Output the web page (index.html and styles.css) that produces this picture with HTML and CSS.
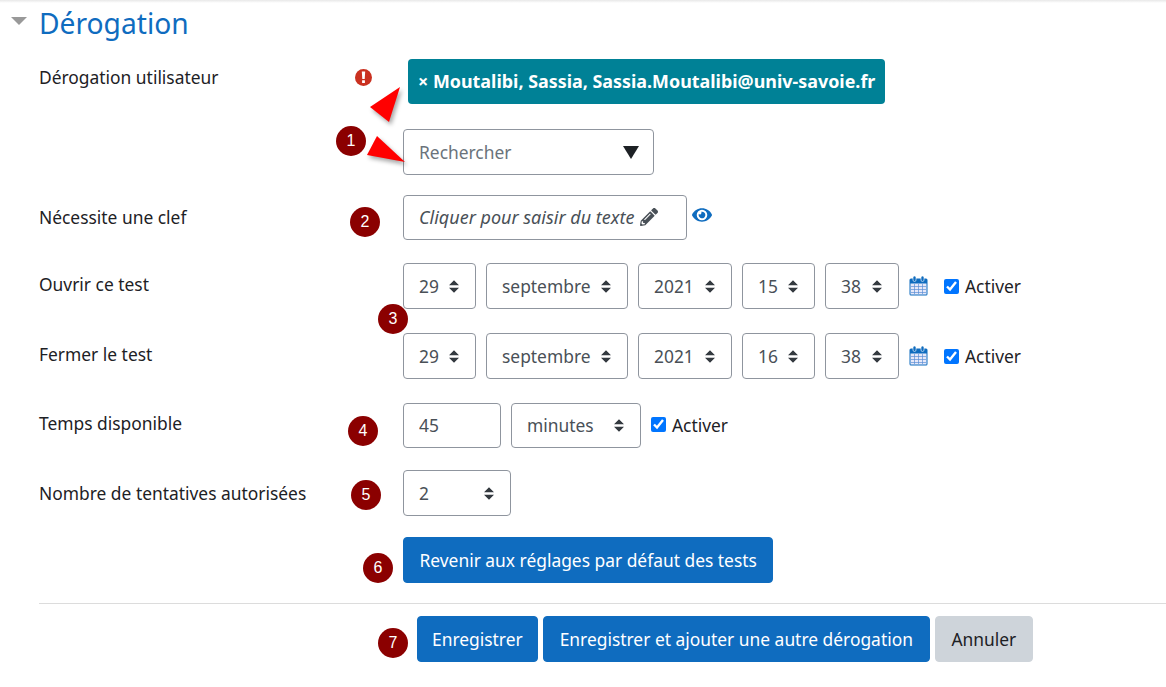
FILE: index.html
```html
<!DOCTYPE html>
<html lang="fr">
<head>
  <meta charset="UTF-8">
  <title>Dérogation</title>
  <link rel="stylesheet" href="styles.css">
</head>
<body>
  <div class="topshade"></div>
  <form class="page">
    <!-- Section heading -->
    <div class="heading">
      <svg class="collapse" width="16" height="8" viewBox="0 0 16 8"><path d="M0 0h16L8 8z" fill="#999"/></svg>
      <h2>Dérogation</h2>
    </div>

    <div class="row row-user">
      <div class="label label-top">
        <span>Dérogation utilisateur</span>
        <svg class="error" width="17" height="17" viewBox="0 0 17 17"><circle cx="8.5" cy="8.5" r="8.5" fill="#ca3120"/><path d="M6.800 2.500h3.400l-.5 7.500H7.300zM7.100 11.200h2.800V14H7.100z" fill="#fff"/></svg>
      </div>
      <span class="chip">× Moutalibi, Sassia, Sassia.Moutalibi@univ-savoie.fr</span>
    </div>

    <div class="row row-search">
      <div class="label"></div>
      <div class="search">
        <span>Rechercher</span>
        <svg width="16" height="13" viewBox="0 0 16 13"><path d="M0 0h16L8 13z" fill="#1d2125"/></svg>
      </div>
    </div>

    <div class="row row-key">
      <div class="label label-up">Nécessite une clef</div>
      <div class="inplace">
        <em>Cliquer pour saisir du texte</em>
        <svg width="18" height="18" viewBox="0 0 512 512"><path fill="#495057" d="M497.9 142.1l-46.1 46.1c-4.7 4.7-12.3 4.7-17 0l-111-111c-4.7-4.7-4.7-12.3 0-17l46.1-46.1c18.7-18.7 49.1-18.7 67.9 0l60.1 60.1c18.8 18.7 18.8 49.1 0 67.9zM284.2 99.8L21.6 362.4.4 483.9c-2.9 16.4 11.4 30.6 27.8 27.8l121.5-21.3 262.6-262.6c4.7-4.7 4.7-12.3 0-17l-111-111c-4.8-4.7-12.4-4.7-17.1 0zM124.1 339.9c-5.5-5.5-5.5-14.3 0-19.8l154-154c5.5-5.5 14.3-5.5 19.8 0s5.5 14.3 0 19.8l-154 154c-5.5 5.5-14.3 5.5-19.8 0zM88 424h48v36.3l-64.5 11.3-31.1-31.1L51.7 376H88v48z"/></svg>
      </div>
      <svg class="eye" width="20" height="14" viewBox="0 0 576 400"><path fill="#0f6cbf" d="M572.5 184.6C518.3 78.8 410.9 8 288 8S57.700 78.900 3.500 184.600a32.400 32.400 0 0 0 0 29.200C57.700 319.200 165.100 392 288 392s230.300-71 284.500-176.600a32.400 32.400 0 0 0 0-30.800zM288 352a152 152 0 1 1 152-152 151.900 151.900 0 0 1-152 152zm0-248a95.300 95.300 0 0 0-25.300 3.800 47.900 47.900 0 0 1-66.900 66.900A95.800 95.800 0 1 0 288 104z"/></svg>
    </div>

    <div class="row row-open">
      <div class="label label-high">Ouvrir ce test</div>
      <div class="dates">
        <select class="sel w-day"><option>29</option></select>
        <select class="sel w-month"><option>septembre</option></select>
        <select class="sel w-year"><option>2021</option></select>
        <select class="sel w-day"><option>15</option></select>
        <select class="sel w-min"><option>38</option></select>
        <svg class="cal" width="19" height="20" viewBox="0 0 19 20"><rect x=".5" y="2.500" width="18" height="17" rx="1.500" fill="#0f6cbf"/><path d="M1.500 7.500h16v11h-16z" fill="#e6e8f8"/><path d="M2 10.500h15M2 13.500h15M2 16.500h15M5.500 8v10M9.500 8v10M13.500 8v10" stroke="#5b8fd6" stroke-width=".7"/><rect x="4" y="0" width="3" height="5.500" rx="1.500" fill="#0f6cbf" stroke="#fff" stroke-width=".6"/><rect x="12" y="0" width="3" height="5.500" rx="1.500" fill="#0f6cbf" stroke="#fff" stroke-width=".6"/></svg>
        <label class="check"><input type="checkbox" checked> Activer</label>
      </div>
    </div>

    <div class="row row-close">
      <div class="label label-high">Fermer le test</div>
      <div class="dates">
        <select class="sel w-day"><option>29</option></select>
        <select class="sel w-month"><option>septembre</option></select>
        <select class="sel w-year"><option>2021</option></select>
        <select class="sel w-day"><option>16</option></select>
        <select class="sel w-min"><option>38</option></select>
        <svg class="cal" width="19" height="20" viewBox="0 0 19 20"><rect x=".5" y="2.500" width="18" height="17" rx="1.500" fill="#0f6cbf"/><path d="M1.500 7.500h16v11h-16z" fill="#e6e8f8"/><path d="M2 10.500h15M2 13.500h15M2 16.500h15M5.500 8v10M9.500 8v10M13.500 8v10" stroke="#5b8fd6" stroke-width=".7"/><rect x="4" y="0" width="3" height="5.500" rx="1.500" fill="#0f6cbf" stroke="#fff" stroke-width=".6"/><rect x="12" y="0" width="3" height="5.500" rx="1.500" fill="#0f6cbf" stroke="#fff" stroke-width=".6"/></svg>
        <label class="check"><input type="checkbox" checked> Activer</label>
      </div>
    </div>

    <div class="row row-time">
      <div class="label label-time">Temps disponible</div>
      <div class="dates">
        <input class="num" type="text" value="45">
        <select class="sel w-unit"><option>minutes</option></select>
        <label class="check check-near"><input type="checkbox" checked> Activer</label>
      </div>
    </div>

    <div class="row row-attempts">
      <div class="label">Nombre de tentatives autorisées</div>
      <select class="sel w-tries"><option>2</option></select>
    </div>

    <div class="row row-reset">
      <div class="label"></div>
      <button type="button" class="btn">Revenir aux réglages par défaut des tests</button>
    </div>

    <hr class="sep">

    <div class="actions">
      <button type="button" class="btn btn-save">Enregistrer</button>
      <button type="button" class="btn btn-long">Enregistrer et ajouter une autre dérogation</button>
      <button type="button" class="btn btn-grey">Annuler</button>
    </div>
  </form>

  <!-- Annotations drawn over the screenshot -->
  <svg class="arrows" width="60" height="90" viewBox="0 0 60 90">
    <path d="M40 7L10 27l19 15z" fill="#f00"/>
    <path d="M17 56L7 75l38 7z" fill="#f00"/>
  </svg>
  <span class="badge b1">1</span>
  <span class="badge b2">2</span>
  <span class="badge b3">3</span>
  <span class="badge b4">4</span>
  <span class="badge b5">5</span>
  <span class="badge b6">6</span>
  <span class="badge b7">7</span>
</body>
</html>
```

FILE: styles.css
```css
html, body { margin: 0; padding: 0; background: #fff; }
body { font-family: "Noto Sans", Arial, sans-serif; font-size: 17.4px; color: #1d2125; height: 687px; overflow: hidden; position: relative; }
.topshade { height: 3px; background: linear-gradient(#e8e8e8, #fff); }
.page { padding-left: 39px; }

.heading { height: 45px; display: flex; align-items: center; position: relative; }
.heading h2 { margin: 0 0 5px; font-size: 28.2px; font-weight: 400; color: #0f6cbf; line-height: 40px; }
.collapse { position: absolute; left: -28px; top: 14px; }

.row { display: flex; align-items: center; }
.label { width: 364px; flex: none; }
.label-top { display: flex; justify-content: space-between; align-items: center; padding-right: 31px; box-sizing: border-box; margin-bottom: 9px; }
.label-up { margin-bottom: 2px; }
.label-high { margin-bottom: 4px; }
.label-time { margin-bottom: 6px; }

.row-user { margin-top: 11px; }
.row-search { margin-top: 25px; }
.row-key { margin-top: 20px; }
.row-open { margin-top: 23px; }
.row-close { margin-top: 24px; }
.row-time { margin-top: 24px; }
.row-attempts { margin-top: 22px; }
.row-reset { margin-top: 21px; }

.chip { margin-left: 5px; height: 45px; box-sizing: border-box; padding: 0 10px 2px; display: flex; align-items: center; background: #008196; color: #fff; font-size: 17.9px; font-weight: 700; border-radius: 4px; white-space: nowrap; }
.search { width: 251px; height: 46px; box-sizing: border-box; border: 1px solid #8f959e; border-radius: 4px; padding: 0 14px 0 15px; display: flex; align-items: center; justify-content: space-between; color: #6a737b; }
.inplace { width: 284px; height: 45px; box-sizing: border-box; border: 1px solid #8f959e; border-radius: 4px; padding: 0 15px 2px; display: flex; align-items: center; gap: 6px; color: #495057; white-space: nowrap; }
.inplace em { font-size: 18px; }
.eye { margin-left: 5px; margin-top: -5px; }

.dates { display: flex; align-items: center; gap: 10px; }
.sel { height: 46px; box-sizing: border-box; border: 1px solid #8f959e; border-radius: 4px; padding: 0 15px; margin: 0; font: inherit; color: #495057; background: #fff url("data:image/svg+xml,%3Csvg xmlns='http://www.w3.org/2000/svg' viewBox='0 0 4 5'%3E%3Cpath fill='%23343a40' d='M2 0L0 2h4zm0 5L0 3h4z'/%3E%3C/svg%3E") no-repeat right 16px center / 10px 13px; appearance: none; -webkit-appearance: none; }
.w-day { width: 73px; }
.w-month { width: 142px; }
.w-year { width: 94px; }
.w-min { width: 74px; }
.w-unit { width: 130px; height: 45px; padding-bottom: 2px; }
.w-tries { width: 108px; }
.num { width: 98px; height: 45px; box-sizing: border-box; border: 1px solid #8f959e; border-radius: 4px; padding: 0 15px 2px; margin: 0; font: inherit; color: #495057; }

.cal { margin-top: -1px; }
.check { display: flex; align-items: center; gap: 6px; margin-left: 6px; }
.check input { width: 15px; height: 15px; margin: 0; }
.check-near { margin-left: 0; padding-bottom: 2px; }

.btn { height: 46px; box-sizing: border-box; padding: 0 15.5px; border: 1px solid #0f6cbf; border-radius: 4px; background: #0f6cbf; color: #fff; font: inherit; white-space: nowrap; }
.btn-save { padding: 0 14px; }
.btn-long { padding: 0 16px; }
.btn-grey { background: #ced4da; border-color: #ced4da; color: #1d2125; }
.sep { margin: 20px 0 0; border: 0; border-top: 1px solid #dcdcdc; }
.actions { margin-top: 12px; padding-left: 378px; display: flex; gap: 5px; }

.arrows { position: absolute; left: 360px; top: 80px; filter: drop-shadow(2px 3px 2px rgba(0,0,0,.35)); }
.badge { position: absolute; width: 30px; height: 30px; border-radius: 50%; background: #8b0000; color: #fff; font-family: "Liberation Sans", Arial, sans-serif; font-size: 16px; line-height: 30px; text-align: center; }
.b1 { left: 336px; top: 126px; }
.b2 { left: 350px; top: 207px; }
.b3 { left: 378px; top: 304px; }
.b4 { left: 348px; top: 416px; }
.b5 { left: 351px; top: 480px; }
.b6 { left: 363px; top: 553px; }
.b7 { left: 378px; top: 628px; }
```
